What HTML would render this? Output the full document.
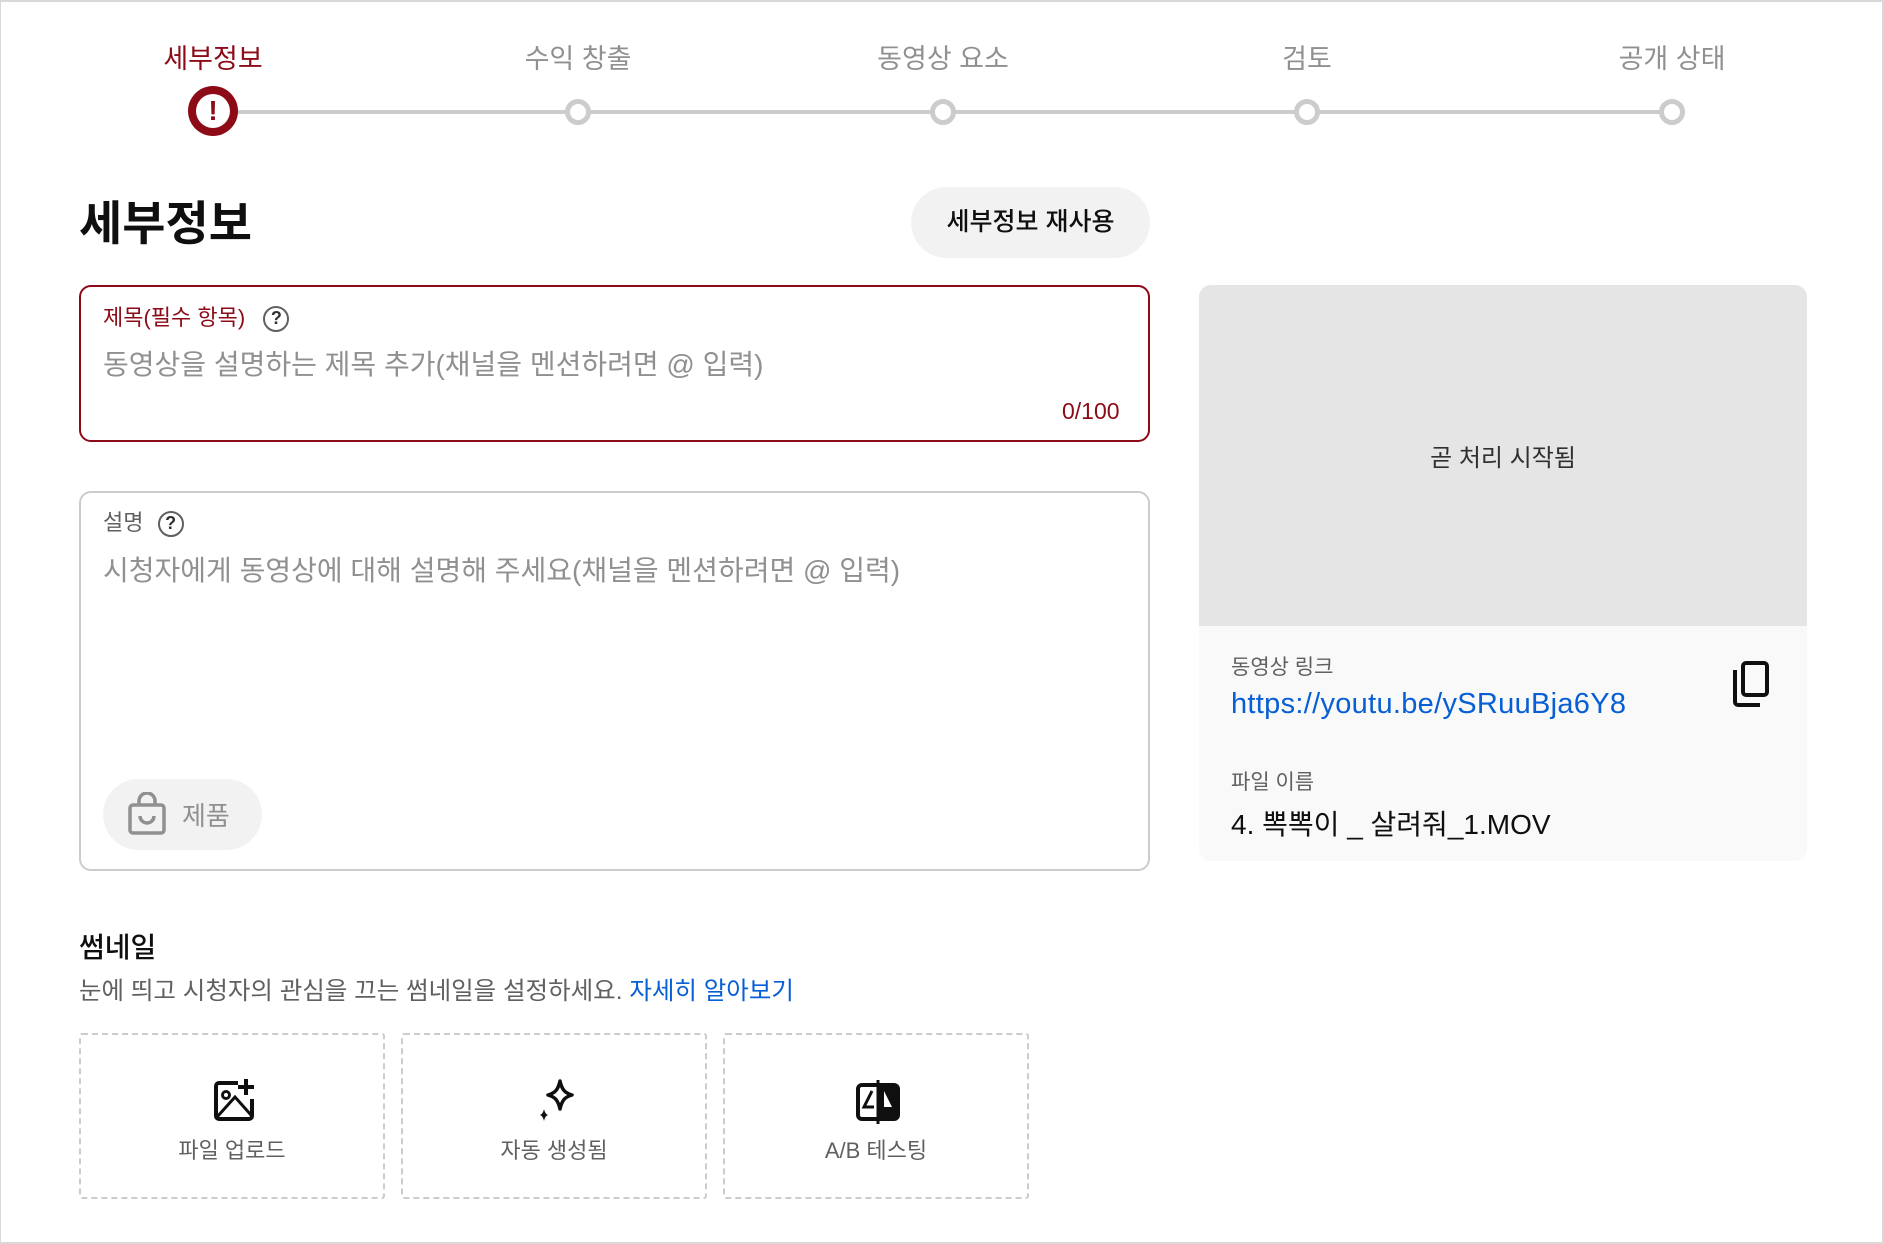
<!DOCTYPE html>
<html><head><meta charset="utf-8"><style>
*{margin:0;padding:0;box-sizing:border-box}
body{width:1884px;height:1244px;position:relative;background:#fff;font-family:"Liberation Sans","Noto Sans CJK KR",sans-serif;color:#0f0f0f;overflow:hidden}
.frame{position:absolute;left:0;top:0;width:1884px;height:1244px;border:2px solid #d9d9d9;border-left-width:1px}
.a{position:absolute;white-space:nowrap}
.step{position:absolute;top:37px;font-size:27px;color:#909090;transform:translateX(-50%)}
.dot{position:absolute;top:99px;width:26px;height:26px;border-radius:50%;border:5px solid #ccc;background:#fff;transform:translateX(-50%)}
.help{display:inline-block;width:26px;height:26px;border:2.5px solid #606060;border-radius:50%;font-size:18px;line-height:21px;text-align:center;color:#303030;font-weight:bold;vertical-align:middle}
.thumb{position:absolute;top:1033px;width:306px;height:166px;border:2px dashed #ccc;border-radius:3px}
.thumb .lbl{position:absolute;top:98px;width:100%;text-align:center;font-size:22px;color:#606060}
.thumb svg{position:absolute;left:129px;top:42px}
</style></head><body>
<div class="frame"></div>

<div style="position:absolute;left:213px;top:110px;width:1459px;height:4px;background:#ccc"></div>
<div class="step" style="left:213px;color:#8c0b17">세부정보</div>
<div class="step" style="left:578px">수익 창출</div>
<div class="step" style="left:943px">동영상 요소</div>
<div class="step" style="left:1307px">검토</div>
<div class="step" style="left:1672px">공개 상태</div>
<div style="position:absolute;left:188px;top:86px;width:50px;height:50px;border-radius:50%;background:#8c0b17"></div>
<div style="position:absolute;left:196px;top:94px;width:34px;height:34px;border-radius:50%;background:#fff;text-align:center;font-size:28px;line-height:34px;font-weight:bold;color:#8c0b17">!</div>
<div class="dot" style="left:578px"></div>
<div class="dot" style="left:943px"></div>
<div class="dot" style="left:1307px"></div>
<div class="dot" style="left:1672px"></div>

<div class="a" style="left:79px;top:185px;font-size:47px;font-weight:bold;color:#0f0f0f">세부정보</div>
<div class="a" style="left:911px;top:187px;width:239px;height:71px;border-radius:36px;background:#f2f2f2;font-size:25px;line-height:71px;text-align:center;font-weight:500">세부정보 재사용</div>

<div style="position:absolute;left:79px;top:285px;width:1071px;height:157px;border:2px solid #8c0b17;border-radius:12px"></div>
<div class="a" style="left:103px;top:300px;font-size:22px;color:#8c0b17">제목(필수 항목) <span class="help" style="margin-left:12px">?</span></div>
<div class="a" style="left:103px;top:343px;font-size:28px;color:#909090">동영상을 설명하는 제목 추가(채널을 멘션하려면 @ 입력)</div>
<div class="a" style="left:1062px;top:398px;font-size:23px;color:#8c0b17">0/100</div>

<div style="position:absolute;left:79px;top:491px;width:1071px;height:380px;border:2px solid #ccc;border-radius:12px"></div>
<div class="a" style="left:103px;top:505px;font-size:22px;color:#606060">설명 <span class="help" style="margin-left:8px">?</span></div>
<div class="a" style="left:103px;top:549px;font-size:28px;color:#909090">시청자에게 동영상에 대해 설명해 주세요(채널을 멘션하려면 @ 입력)</div>
<div class="a" style="left:103px;top:779px;width:159px;height:71px;border-radius:36px;background:#f2f2f2"></div>
<svg class="a" style="left:126px;top:792px" width="42" height="44" viewBox="0 0 42 44"><rect x="4" y="13" width="34" height="28" rx="3" fill="none" stroke="#909090" stroke-width="3.5"/><path d="M13 13V9a8 8 0 0 1 16 0v4" fill="none" stroke="#909090" stroke-width="3.5"/><path d="M14 24a7 7 0 0 0 14 0" fill="none" stroke="#909090" stroke-width="3.5"/></svg>
<div class="a" style="left:182px;top:796px;font-size:26px;color:#909090">제품</div>

<div class="a" style="left:79px;top:926px;font-size:28px;font-weight:500">썸네일</div>
<div class="a" style="left:79px;top:972px;font-size:24.5px;color:#606060">눈에 띄고 시청자의 관심을 끄는 썸네일을 설정하세요. <span style="color:#065fd4">자세히 알아보기</span></div>

<div class="thumb" style="left:79px"><svg width="48" height="48" viewBox="0 0 48 48"><path d="M28 6H9a3 3 0 0 0-3 3v30a3 3 0 0 0 3 3h30a3 3 0 0 0 3-3V22" fill="none" stroke="#0f0f0f" stroke-width="4"/><path d="M36 2v16M28 10h16" stroke="#0f0f0f" stroke-width="4"/><circle cx="16" cy="18" r="3.5" fill="none" stroke="#0f0f0f" stroke-width="3"/><path d="M7 40l18-20 16 18" fill="none" stroke="#0f0f0f" stroke-width="3"/></svg><div class="lbl">파일 업로드</div></div>
<div class="thumb" style="left:401px"><svg width="48" height="48" viewBox="0 0 48 48"><path d="M28 4c2 9 5 12 12 14-7 2-10 5-12 14-2-9-5-12-12-14 7-2 10-5 12-14z" fill="none" stroke="#0f0f0f" stroke-width="3.5" stroke-linejoin="round"/><path d="M12 32c1 4 2 5 4 6-2 1-3 2-4 6-1-4-2-5-4-6 2-1 3-2 4-6z" fill="#0f0f0f"/></svg><div class="lbl">자동 생성됨</div></div>
<div class="thumb" style="left:723px"><svg width="48" height="48" viewBox="0 0 48 48"><rect x="4" y="8" width="40" height="34" rx="4" fill="none" stroke="#0f0f0f" stroke-width="4"/><rect x="24" y="8" width="20" height="34" rx="3" fill="#0f0f0f"/><path d="M24 3v44" stroke="#0f0f0f" stroke-width="3"/><path d="M18 14l-8 16h10" fill="none" stroke="#0f0f0f" stroke-width="3"/><path d="M30 14l8 16h-8z" fill="#fff"/></svg><div class="lbl">A/B 테스팅</div></div>

<div style="position:absolute;left:1199px;top:285px;width:608px;height:576px;border-radius:12px;overflow:hidden;background:#f9f9f9">
<div style="height:341px;background:#e5e5e5"></div></div>
<div class="a" style="left:1503px;top:438px;transform:translateX(-50%);font-size:24px;color:#303030">곧 처리 시작됨</div>
<div class="a" style="left:1231px;top:651px;font-size:21px;color:#606060">동영상 링크</div>
<div class="a" style="left:1231px;top:688px;font-size:29px;letter-spacing:0.3px;color:#065fd4">https://youtu.be/ySRuuBja6Y8</div>
<svg class="a" style="left:1731px;top:660px" width="40" height="48" viewBox="0 0 40 48"><rect x="12" y="3" width="24" height="32" rx="3" fill="none" stroke="#0f0f0f" stroke-width="4"/><path d="M4 10v32a3 3 0 0 0 3 3h22" fill="none" stroke="#0f0f0f" stroke-width="4"/></svg>
<div class="a" style="left:1231px;top:766px;font-size:21px;color:#606060">파일 이름</div>
<div class="a" style="left:1231px;top:803px;font-size:28px;color:#0f0f0f">4. 뽁뽁이 _ 살려줘_1.MOV</div>
</body></html>
